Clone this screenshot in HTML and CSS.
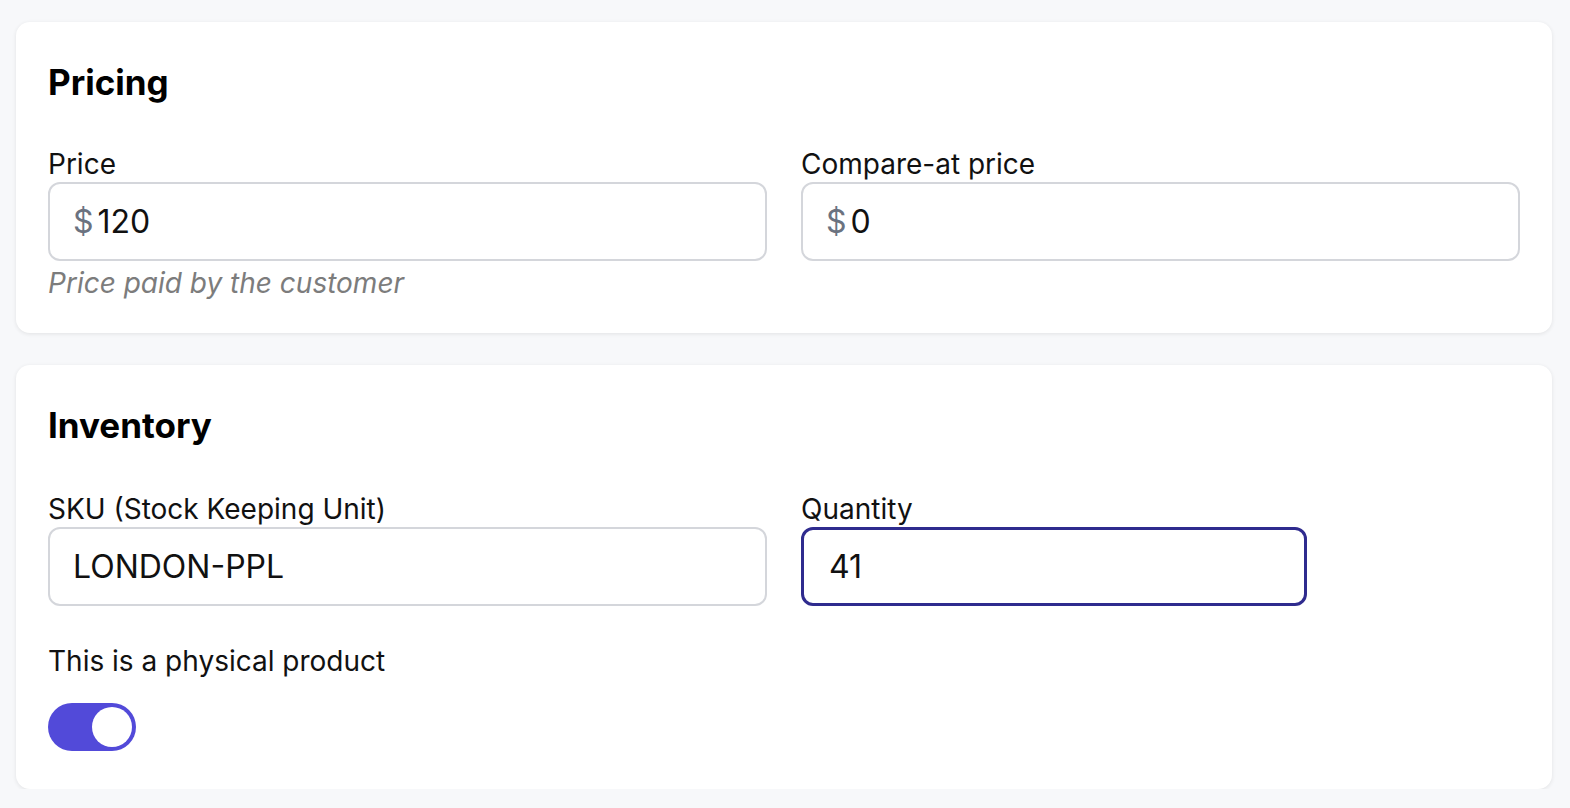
FILE: index.html
```html
<!DOCTYPE html>
<html lang="en">
<head>
    <meta charset="UTF-8">
    <meta name="viewport" content="width=device-width, initial-scale=1.0">
    <title>Product details</title>
    <link rel="stylesheet" href="styles.css">
</head>
<body>

<div class="page">
    <section class="card">
        <h2>Pricing</h2>
        <div class="fields">
            <div class="field">
                <label for="price">Price</label>
                <div class="input-box">
                    <span class="prefix">$</span>
                    <input type="text" id="price" value="120">
                </div>
                <div class="hint">Price paid by the customer</div>
            </div>
            <div class="field">
                <label for="compare">Compare-at price</label>
                <div class="input-box">
                    <span class="prefix">$</span>
                    <input type="text" id="compare" value="0">
                </div>
            </div>
        </div>
    </section>

    <section class="card card-inventory">
        <h2>Inventory</h2>
        <div class="fields">
            <div class="field">
                <label for="sku">SKU (Stock Keeping Unit)</label>
                <div class="input-box">
                    <input type="text" id="sku" value="LONDON-PPL">
                </div>
            </div>
            <div class="field">
                <label for="qty">Quantity</label>
                <div class="input-box input-qty focused">
                    <input type="text" id="qty" value="41">
                </div>
            </div>
        </div>

        <div class="toggle-row">
            <span class="toggle-label">This is a physical product</span>
            <button class="toggle on" type="button" onclick="this.classList.toggle('on')">
                <span class="knob"></span>
            </button>
        </div>
    </section>
</div>

</body>
</html>
```

FILE: styles.css
```css
body {
    margin: 0;
    background: #f7f8fa;
    font-family: Inter, "Noto Sans", sans-serif;
    color: #111;
}
.page {
    display: flex;
    flex-direction: column;
    gap: 32px;
    padding: 22px 18px 0 16px;
}
.card {
    background: white;
    border-radius: 14px;
    box-shadow: 0 1px 4px rgba(0, 0, 0, 0.09);
    padding: 38px 32px 32px 32px;
}
.card-inventory {
    padding-bottom: 38px;
}
.card-inventory .fields {
    margin-top: 44px;
}
h2 {
    margin: 0;
    font-size: 35px;
    line-height: 44px;
    font-weight: 700;
    color: #000;
}
.fields {
    display: grid;
    grid-template-columns: 1fr 1fr;
    gap: 34px;
    margin-top: 42px;
}
.field label {
    display: block;
    font-size: 28px;
    line-height: 36px;
}
.input-box {
    display: flex;
    align-items: center;
    height: 79px;
    box-sizing: border-box;
    border: 2px solid #d4d6db;
    border-radius: 12px;
    padding: 0 23px;
    background: white;
}
.input-qty {
    width: 506px;
}
.input-box.focused {
    border: 3px solid #2f2b8e;
    padding: 0 25px;
}
.prefix {
    font-size: 32px;
    color: #6b7280;
    margin-right: 4px;
}
.input-box input {
    border: none;
    outline: none;
    padding: 0;
    flex: 1;
    min-width: 0;
    font-family: inherit;
    font-size: 32px;
    color: #111;
    background: transparent;
}
.hint {
    margin-top: 4px;
    font-size: 28px;
    line-height: 36px;
    font-style: italic;
    color: #7c7c7c;
}
.toggle-row {
    display: flex;
    flex-direction: column;
    align-items: flex-start;
    gap: 24px;
    margin-top: 37px;
}
.toggle-label {
    font-size: 28px;
    line-height: 36px;
}
.toggle {
    width: 88px;
    height: 48px;
    border: none;
    border-radius: 24px;
    background: #d1d5db;
    padding: 4px;
    display: flex;
    cursor: pointer;
}
.toggle.on {
    background: #524ad9;
    justify-content: flex-end;
}
.knob {
    width: 40px;
    height: 40px;
    border-radius: 50%;
    background: white;
}
```
